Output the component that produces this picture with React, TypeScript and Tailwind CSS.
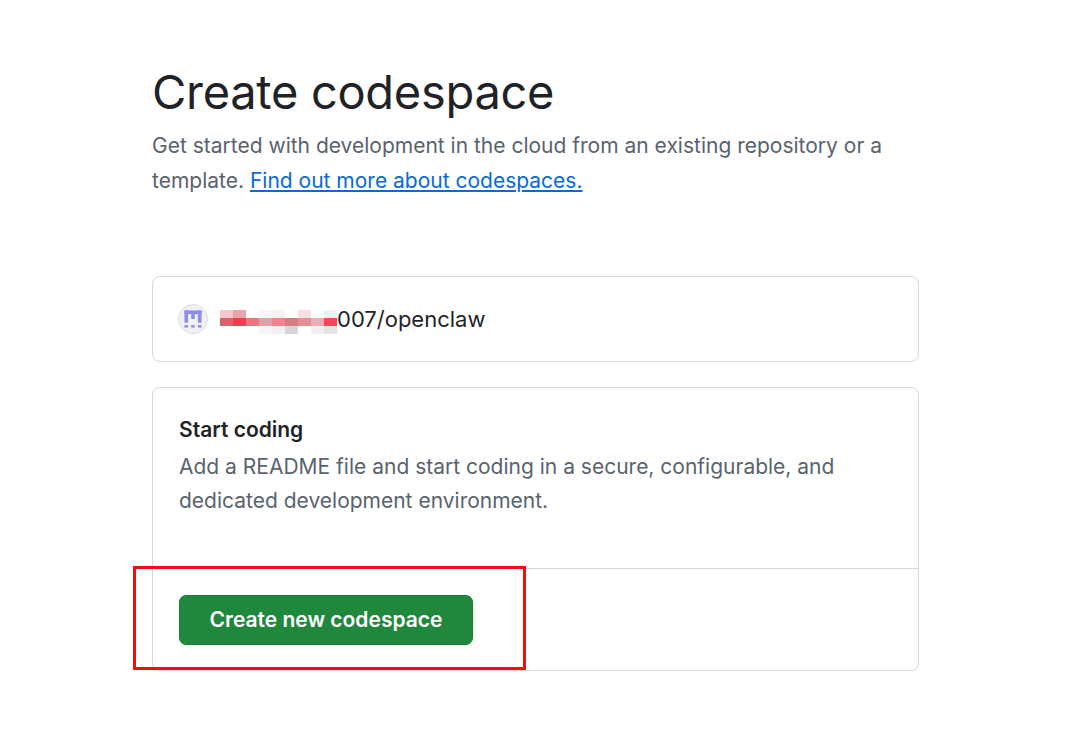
import React from 'react';

const blocks = [
  ['#f3c9cc', '#e8a5ab', '#fff', '#f7f7f7', '#f4f4f4', '#fff', '#f8dfe2', '#fff', '#f0f0f0'],
  ['#d9636c', '#ec3f4f', '#e77880', '#dea3a8', '#f1848c', '#d67d85', '#e48e96', '#e8b0b5', '#f0495b'],
  ['#fff', '#fff', '#fff', '#f5f5f5', '#f1f1f1', '#d6d6d6', '#fff', '#f0f0f0', '#e3e3e3'],
];

const Avatar = () => (
  <div className="w-[30px] h-[30px] rounded-full bg-[#f0f0f5] border border-[#dcdce6] flex items-center justify-center">
    <svg width="22" height="22" viewBox="0 0 18 18">
      <rect x="2" y="2" width="14" height="3" fill="#8c8de8" />
      <rect x="2" y="2" width="3" height="10" fill="#8c8de8" />
      <rect x="13" y="2" width="3" height="10" fill="#8c8de8" />
      <rect x="7.5" y="5" width="3" height="4" fill="#8c8de8" />
      <rect x="2" y="14" width="3" height="2" fill="#8c8de8" />
      <rect x="7.5" y="14" width="3" height="2" fill="#8c8de8" />
      <rect x="13" y="14" width="3" height="2" fill="#8c8de8" />
    </svg>
  </div>
);

export default function App() {
  return (
    <div className="min-h-[736px] bg-white text-[#1f2328]" style={{ fontFamily: 'Inter, "Noto Sans", sans-serif' }}>
      <div className="w-[767px] ml-[152px] pt-[62px]">
        <h1 className="text-[47px] leading-[60px] font-normal tracking-[-0.3px]">Create codespace</h1>
        <p className="mt-[6px] text-[21px] leading-[35px] text-[#59636e]">
          Get started with development in the cloud from an existing repository or a template.{' '}
          <a href="#" className="text-[#0969da] underline">Find out more about codespaces.</a>
        </p>

        <div className="mt-[78px] h-[86px] border border-[#d1d9e0] rounded-[8px] px-[25px] flex items-center gap-[12px]">
          <Avatar />
          <div className="flex items-center">
            <div className="flex flex-col mt-[6px]">
              {blocks.map((row, i) => (
                <div key={i} className="flex">
                  {row.map((c, j) => (
                    <div key={j} className="w-[13px] h-[8px]" style={{ background: c }} />
                  ))}
                </div>
              ))}
            </div>
            <span className="text-[22px] leading-[30px]">007/openclaw</span>
          </div>
        </div>

        <div className="relative mt-[25px] border border-[#d1d9e0] rounded-[8px]">
          <div className="px-[26px] pt-[27px] pb-[50px]">
            <h2 className="text-[21px] leading-[30px] font-semibold">Start coding</h2>
            <p className="mt-[5px] text-[21px] leading-[34px] text-[#59636e]">
              Add a README file and start coding in a secure, configurable, and dedicated development environment.
            </p>
          </div>
          <div className="border-t border-[#d1d9e0] px-[26px] pt-[26px] pb-[25px]">
            <button className="h-[50px] w-[294px] rounded-[7px] bg-[#1f883d] border border-[#1a7f37] text-white text-[21px] font-semibold">
              Create new codespace
            </button>
          </div>
          <div className="absolute left-[-20px] top-[178px] w-[393px] h-[104px] border-[3px] border-[#f00f0f] pointer-events-none" />
        </div>
      </div>
    </div>
  );
}
